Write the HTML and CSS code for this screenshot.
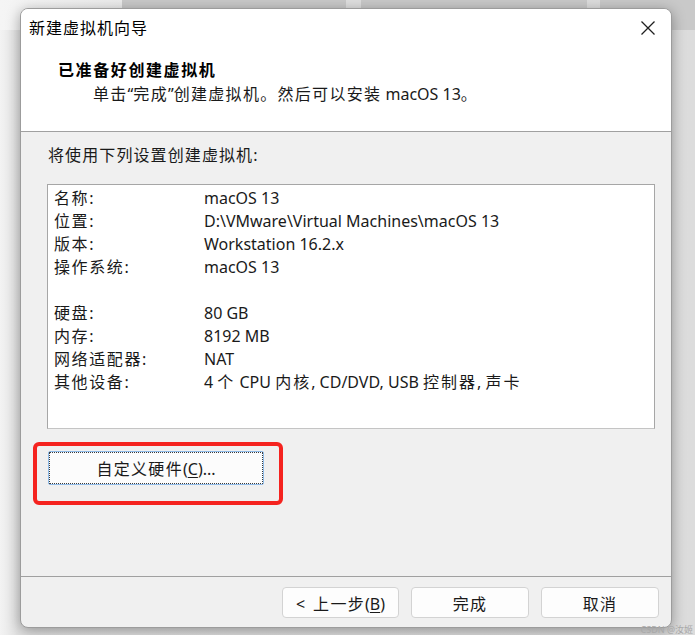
FILE: index.html
```html
<!DOCTYPE html>
<html lang="zh-CN">
<head>
<meta charset="utf-8">
<title>新建虚拟机向导</title>
<link rel="stylesheet" href="styles.css">
</head>
<body>
<div class="desk">
  <div class="bg-bars">
    <div class="bg-gap1"></div>
    <div class="bg-bar b1"></div>
    <div class="bg-bar b2"></div>
    <div class="bg-bar b3"></div>
  </div>

  <div class="dialog">
    <div class="titlebar">
      <span class="title zh">新建虚拟机向导</span>
      <svg class="close" width="16" height="16" viewBox="0 0 16 16" aria-hidden="true">
        <path d="M1.5 1.5 L14.5 14.5 M14.5 1.5 L1.5 14.5" stroke="#1f1f1f" stroke-width="1.3" fill="none"/>
      </svg>
    </div>

    <div class="header">
      <div class="h-title zh">已准备好创建虚拟机</div>
      <div class="h-sub"><span class="zh">单击</span>“<span class="zh">完成</span>”<span class="zh">创建虚拟机。然后可以安装</span> macOS 13<span class="zh">。</span></div>
    </div>

    <div class="content">
      <div class="intro zh">将使用下列设置创建虚拟机:</div>
      <div class="listbox">
        <div class="row"><span class="lbl zh">名称:</span><span class="val">macOS 13</span></div>
        <div class="row"><span class="lbl zh">位置:</span><span class="val">D:\VMware\Virtual Machines\macOS 13</span></div>
        <div class="row"><span class="lbl zh">版本:</span><span class="val">Workstation 16.2.x</span></div>
        <div class="row"><span class="lbl zh">操作系统:</span><span class="val">macOS 13</span></div>
        <div class="row"></div>
        <div class="row"><span class="lbl zh">硬盘:</span><span class="val">80 GB</span></div>
        <div class="row"><span class="lbl zh">内存:</span><span class="val">8192 MB</span></div>
        <div class="row"><span class="lbl zh">网络适配器:</span><span class="val">NAT</span></div>
        <div class="row"><span class="lbl zh">其他设备:</span><span class="val">4 <span class="zv">个</span> CPU <span class="zv">内核</span>, CD/DVD, USB <span class="zv">控制器</span>, <span class="zv">声卡</span></span></div>
      </div>
      <div class="custom-wrap">
        <button class="btn custom"><span class="zh">自定义硬件</span>(<u>C</u>)...</button>
        <div class="annot"></div>
      </div>
    </div>

    <div class="footer">
      <button class="btn fbtn"><span class="lt">&lt;</span><span class="zh">上一步</span>(<u>B</u>)</button>
      <button class="btn fbtn zh">完成</button>
      <button class="btn fbtn zh">取消</button>
    </div>
  </div>

  <div class="watermark">CSDN @汝姬</div>
</div>
</body>
</html>
```

FILE: styles.css
```css
* { box-sizing: border-box; }

html, body {
  margin: 0;
  padding: 0;
}

body {
  width: 695px;
  height: 635px;
  overflow: hidden;
  background: linear-gradient(to right, #f3f3f3 0px, #e2e2e2 18px, #dcdcdc 100%);
  font-family: "Noto Sans", "Noto Sans CJK SC", sans-serif;
  color: #1a1a1a;
}

.desk {
  position: relative;
  width: 695px;
  height: 635px;
  padding: 8px 0 0 20px;
}

.bg-bars {
  position: absolute;
  left: 0;
  top: 0;
  width: 695px;
  height: 30px;
  display: flex;
}

.bg-gap1 {
  width: 122px;
  background: linear-gradient(to right, #f5f5f5, #ececec);
}

.bg-bar {
  background: #c9c9c9;
  height: 30px;
}

.b1 { width: 224px; margin-right: 15px; }
.b2 { width: 226px; margin-right: 13px; }
.b3 { flex: 1; }

.dialog {
  position: relative;
  width: 652px;
  height: 620px;
  background: #f0f0f0;
  border: 1px solid #9c9c9c;
  border-radius: 8px;
  overflow: hidden;
  display: flex;
  flex-direction: column;
  box-shadow: 0 3px 14px rgba(0, 0, 0, 0.35);
}

.zh { letter-spacing: 1.3px; }
.zv { letter-spacing: 2px; }

.titlebar {
  height: 39px;
  background: #ffffff;
  display: flex;
  align-items: center;
  justify-content: space-between;
  padding: 0 15px 0 8px;
}

.title {
  font-size: 16px;
  line-height: 39px;
  color: #000;
  letter-spacing: 1px;
}

.close {
  display: block;
  margin-top: -2px;
}

.header {
  height: 84px;
  background: #ffffff;
  border-bottom: 1px solid #a0a0a0;
  padding: 11px 0 0 37px;
}

.h-title {
  font-size: 16px;
  line-height: 22px;
  font-weight: 700;
  color: #000;
  letter-spacing: 1.6px;
}

.h-sub {
  margin-top: 2px;
  padding-left: 35px;
  font-size: 16px;
  line-height: 22px;
  color: #1a1a1a;
}

.content {
  flex: 1;
  padding: 12px 16px 0 26px;
}

.intro {
  font-size: 16px;
  line-height: 22px;
  padding-left: 1px;
  letter-spacing: 1.1px;
}

.listbox {
  margin-top: 18px;
  height: 245px;
  background: #ffffff;
  border: 1px solid #a6a6a6;
  border-bottom-color: #c4c4c4;
  padding: 2px 0 0 6px;
}

.row {
  display: flex;
  height: 23px;
  line-height: 23px;
  font-size: 16px;
}

.lbl {
  width: 150px;
  flex: none;
  letter-spacing: 1.6px;
}

.val { white-space: nowrap; }

.custom-wrap {
  position: relative;
  width: 216px;
  margin: 22px 0 0 1px;
}

.btn {
  font-family: "Noto Sans", "Noto Sans CJK SC", sans-serif;
  font-size: 16px;
  color: #1a1a1a;
  background: #fdfdfd;
  border: 1px solid #d3d3d3;
  border-radius: 4px;
  padding: 0;
  cursor: default;
}

.btn u { text-underline-offset: 2px; }

.lt { margin-right: 8px; }

.custom {
  display: block;
  width: 216px;
  height: 34px;
  border-color: #8fbbe8;
  border-radius: 2px;
  outline: 1px dotted #3a3a3a;
  outline-offset: -2px;
  background: #fcfcfc;
}

.annot {
  position: absolute;
  left: -15px;
  top: -9px;
  width: 250px;
  height: 63px;
  border: 4px solid #f5231f;
  border-radius: 6px;
  pointer-events: none;
}

.footer {
  height: 51px;
  border-top: 1px solid #a0a0a0;
  display: flex;
  justify-content: flex-end;
  gap: 12px;
  padding: 10px 12px 0 0;
}

.fbtn {
  width: 118px;
  height: 31px;
}

.fbtn:first-child { width: 117px; }

.watermark {
  position: absolute;
  right: 2px;
  bottom: 0;
  font-size: 9px;
  line-height: 10px;
  color: #a8a8a8;
  font-family: "Noto Sans", "Noto Sans CJK SC", sans-serif;
}
```
